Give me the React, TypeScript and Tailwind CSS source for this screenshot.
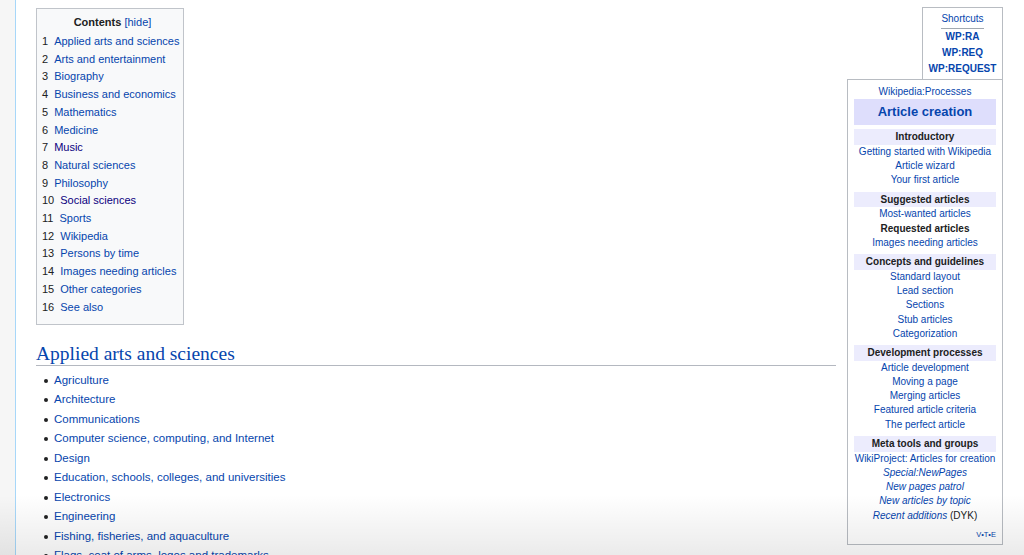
import React from 'react';

const tocItems = [
  'Applied arts and sciences',
  'Arts and entertainment',
  'Biography',
  'Business and economics',
  'Mathematics',
  'Medicine',
  'Music',
  'Natural sciences',
  'Philosophy',
  'Social sciences',
  'Sports',
  'Wikipedia',
  'Persons by time',
  'Images needing articles',
  'Other categories',
  'See also',
];

// sections the reader already opened show in the visited colour
const visited = new Set([7, 10]);

const applied = [
  'Agriculture',
  'Architecture',
  'Communications',
  'Computer science, computing, and Internet',
  'Design',
  'Education, schools, colleges, and universities',
  'Electronics',
  'Engineering',
  'Fishing, fisheries, and aquaculture',
  'Flags, coat of arms, logos and trademarks',
  'Forestry',
];

type Entry = { text: string; italic?: boolean; self?: boolean; suffix?: string };

const groups: { title: string; items: Entry[] }[] = [
  {
    title: 'Introductory',
    items: [{ text: 'Getting started with Wikipedia' }, { text: 'Article wizard' }, { text: 'Your first article' }],
  },
  {
    title: 'Suggested articles',
    items: [{ text: 'Most-wanted articles' }, { text: 'Requested articles', self: true }, { text: 'Images needing articles' }],
  },
  {
    title: 'Concepts and guidelines',
    items: [
      { text: 'Standard layout' },
      { text: 'Lead section' },
      { text: 'Sections' },
      { text: 'Stub articles' },
      { text: 'Categorization' },
    ],
  },
  {
    title: 'Development processes',
    items: [
      { text: 'Article development' },
      { text: 'Moving a page' },
      { text: 'Merging articles' },
      { text: 'Featured article criteria' },
      { text: 'The perfect article' },
    ],
  },
  {
    title: 'Meta tools and groups',
    items: [
      { text: 'WikiProject: Articles for creation' },
      { text: 'Special:NewPages', italic: true },
      { text: 'New pages patrol', italic: true },
      { text: 'New articles by topic', italic: true },
      { text: 'Recent additions', italic: true, suffix: ' (DYK)' },
    ],
  },
];

function Toc() {
  return (
    <div className="mt-px w-[148px] border border-[#c0c4ca] bg-[#f8f9fa] pb-[8px] pl-[5px] pt-[5px] text-[11px]">
      <div className="text-center leading-[17px]">
        <span className="font-bold">Contents</span>{' '}
        <span className="text-[#0645ad]">[hide]</span>
      </div>
      <ul className="mt-[2px]">
        {tocItems.map((item, i) => (
          <li key={item} className="flex leading-[17.7px]">
            <span className="mr-[6px]">{i + 1}</span>
            <a className={visited.has(i + 1) ? 'text-[#0b0080]' : 'text-[#0645ad]'}>{item}</a>
          </li>
        ))}
      </ul>
    </div>
  );
}

function Shortcuts() {
  return (
    <div className="flex w-[81px] flex-col items-center border-x border-t border-[#b8bcc2] bg-white pb-[2px] pt-[4px] text-[10px]">
      <span className="leading-[14px] text-[#0645ad]">Shortcuts</span>
      <span className="mt-[2px] h-px w-[43px] bg-[#a2a9b1]" />
      {['WP:RA', 'WP:REQ', 'WP:REQUEST'].map((s) => (
        <span key={s} className="font-bold leading-[16px] text-[#0645ad]">
          {s}
        </span>
      ))}
    </div>
  );
}

function Navbox() {
  return (
    <div className="w-[156px] border border-[#b8bcc2] bg-white px-[6px] pb-[4px] pt-[5px] text-center text-[10px]">
      <div className="leading-[14px] text-[#0645ad]">Wikipedia:Processes</div>
      <div className="flex h-[26px] items-center justify-center bg-[#dedefc] text-[13px] font-bold text-[#0645ad]">
        Article creation
      </div>
      {groups.map((g) => (
        <div key={g.title} className="mt-[4.4px]">
          <div className="h-[15.5px] bg-[#ececfd] font-bold leading-[15.5px]">{g.title}</div>
          {g.items.map((it) => (
            <div key={it.text} className="leading-[14.2px]">
              {it.self ? (
                <span className="font-bold">{it.text}</span>
              ) : (
                <a className={it.italic ? 'italic text-[#0645ad]' : 'text-[#0645ad]'}>{it.text}</a>
              )}
              {it.suffix}
            </div>
          ))}
        </div>
      ))}
      <div className="mt-[7px] text-right text-[7.5px] leading-[10px] text-[#0645ad]">V•T•E</div>
    </div>
  );
}

export default function App() {
  return (
    <div className="relative flex h-[555px] overflow-hidden bg-white font-['Liberation_Sans',Arial,sans-serif] text-[#202122]">
      <div className="w-[16px] shrink-0 border-r border-[#a7d7f9] bg-[#f6f6f6]" />
      <main className="flex min-w-0 flex-1 gap-[11px] pl-[20px] pr-[21px] pt-[7px]">
        <div className="min-w-0 flex-1">
          <Toc />
          <h2 className="mt-[18px] border-b border-[#b4b8c0] font-['Liberation_Serif','Times_New_Roman',serif] text-[19.5px] leading-[22px] text-[#0645ad]">
            Applied arts and sciences
          </h2>
          <ul className="mt-[4.5px] text-[11.5px]">
            {applied.map((item) => (
              <li key={item} className="flex items-center leading-[19.5px]">
                <span className="ml-[8px] mr-[6px] h-[4px] w-[4px] rounded-full bg-[#202122]" />
                <a className="text-[#0645ad]">{item}</a>
              </li>
            ))}
          </ul>
        </div>
        <aside className="flex w-[156px] shrink-0 flex-col items-end">
          <Shortcuts />
          <Navbox />
        </aside>
      </main>
      <div className="pointer-events-none absolute inset-x-0 bottom-0 h-[60px] bg-linear-to-b from-transparent to-black/[0.08]" />
    </div>
  );
}
